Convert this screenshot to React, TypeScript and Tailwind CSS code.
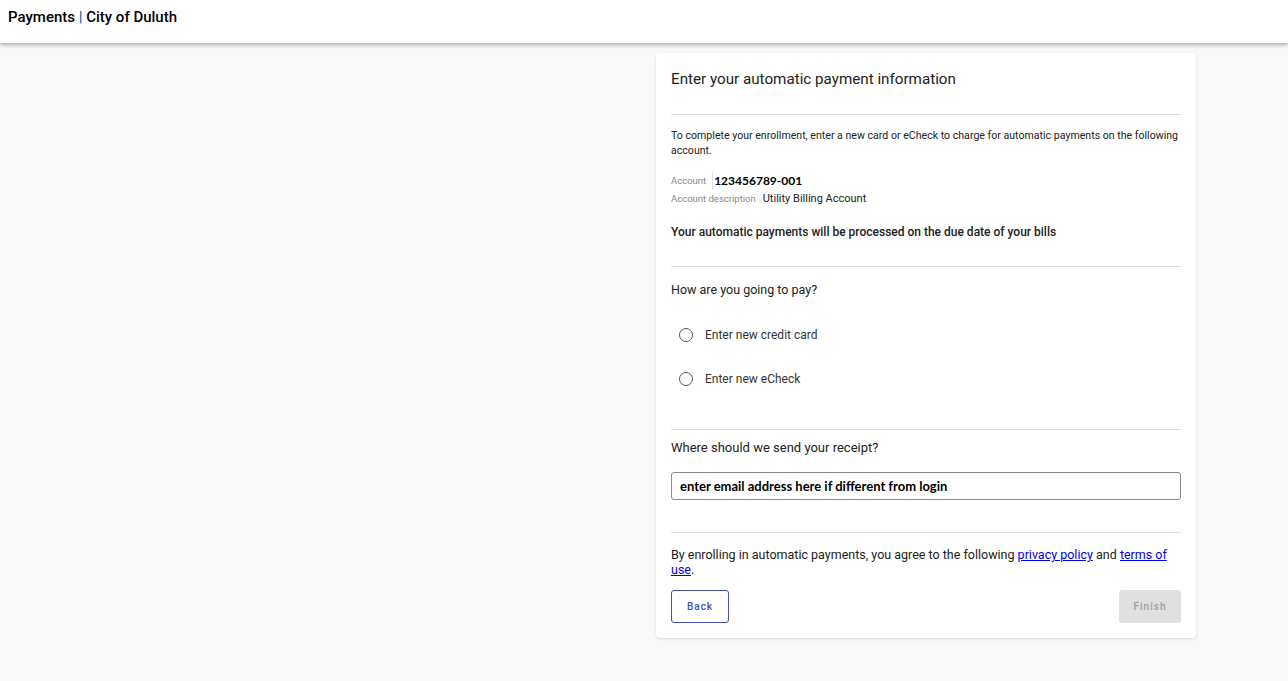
export default function App() {
  return (
    <div className="min-h-[681px] bg-[#f9f9f9] font-['Roboto',sans-serif] text-[#212121]">
      <header className="h-[43px] bg-white px-2 pt-[8px] shadow-[0_2px_4px_rgba(0,0,0,0.3)] relative z-10">
        <h1 className="text-[15px] leading-[18px] font-medium text-black">
          Payments <span className="text-[#1565c0]">|</span> City of Duluth
        </h1>
      </header>

      <main className="flex pt-[10px]">
        <div className="w-[656px] shrink-0" />
        <div className="w-[540px] bg-white rounded-[4px] shadow-[0_1px_3px_rgba(0,0,0,0.12)] px-[15px] pt-[16px] pb-[15px]">
          <h2 className="text-[15.2px] leading-[20px] text-[#222]">Enter your automatic payment information</h2>
          <div className="h-px bg-[#e0e0e0] mt-[25px]" />

          <p className="text-[10.6px] leading-[15px] mt-[13px] text-[#222]">
            To complete your enrollment, enter a new card or eCheck to charge for automatic payments on the following account.
          </p>

          <div className="mt-[14px] flex items-center h-[18px]">
            <span className="text-[9.5px] text-[#888] mr-[6px]">Account</span>
            <span className="border-l border-[#ddd] pl-[1px] text-[12px] font-bold text-black font-['Lato',sans-serif]">
              123456789-001
            </span>
          </div>
          <div className="flex items-center h-[18px]">
            <span className="text-[9.5px] text-[#888] mr-[7px]">Account description</span>
            <span className="text-[11px] text-[#222]">Utility Billing Account</span>
          </div>

          <p className="text-[12px] font-medium mt-[15px] text-[#222]">
            Your automatic payments will be processed on the due date of your bills
          </p>
          <div className="h-px bg-[#e0e0e0] mt-[25px]" />

          <p className="text-[12.5px] mt-[14px] text-[#222]">How are you going to pay?</p>

          <div className="mt-[27px] flex flex-col gap-[28px] pl-[8px]">
            {["Enter new credit card", "Enter new eCheck"].map((label) => (
              <label key={label} className="flex items-center h-[16px]">
                <span className="w-[14px] h-[14px] rounded-full border border-[#555] bg-white" />
                <span className="ml-[12px] text-[12px] text-[#333]">{label}</span>
              </label>
            ))}
          </div>

          <div className="h-px bg-[#e0e0e0] mt-[42px]" />
          <p className="text-[13px] mt-[8px] text-[#222]">Where should we send your receipt?</p>

          <div className="mt-[15px] h-[28px] border border-[#8a8a8a] rounded-[3px] flex items-center px-[8px]">
            <span className="text-[13px] font-bold text-black font-['Lato',sans-serif]">
              enter email address here if different from login
            </span>
          </div>

          <div className="h-px bg-[#e0e0e0] mt-[32px]" />
          <p className="text-[12.5px] leading-[15px] mt-[14px] text-[#222]">
            By enrolling in automatic payments, you agree to the following{" "}
            <a href="#" className="text-[#0000ee] underline">privacy policy</a> and{" "}
            <a href="#" className="text-[#0000ee] underline">terms of use</a>.
          </p>

          <div className="flex justify-between mt-[13px]">
            <button className="h-[33px] w-[58px] border border-[#3f51b5] rounded-[3px] text-[10px] font-medium tracking-[1px] text-[#3f51b5]">
              Back
            </button>
            <button className="h-[33px] w-[62px] bg-[#e0e0e0] rounded-[3px] text-[10px] font-medium tracking-[1px] text-[#9e9e9e]">
              Finish
            </button>
          </div>
        </div>
      </main>
    </div>
  )
}
